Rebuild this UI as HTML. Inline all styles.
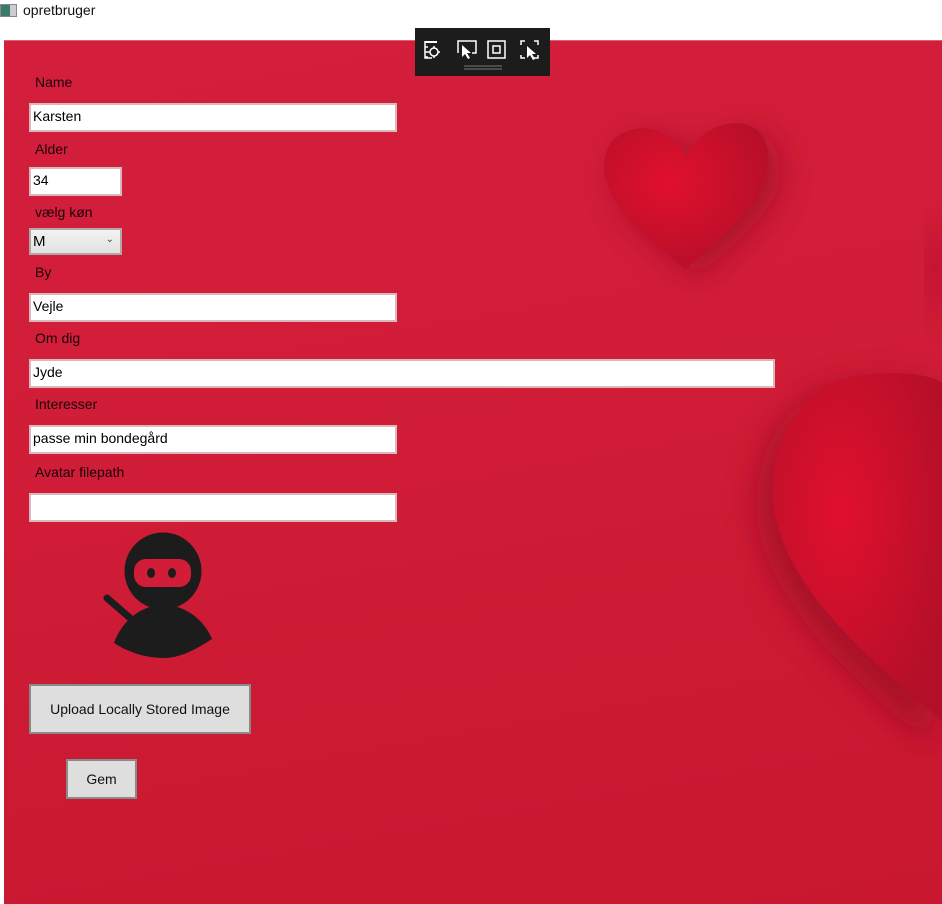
<!DOCTYPE html>
<html><head><meta charset="utf-8"><style>
*{margin:0;padding:0;box-sizing:border-box}
body{width:942px;height:904px;background:#fff;font-family:"Segoe UI","Liberation Sans",sans-serif;font-size:14px;position:relative;overflow:hidden;color:#111}
.title{position:absolute;left:0;top:0;height:22px;line-height:20px;font-size:14px}
.title i{display:inline-block;width:17px;height:13px;border:1px solid #888;background:linear-gradient(90deg,#3a7a6a 60%,#ccc 60%);vertical-align:-2px;margin-right:6px}
.main{position:absolute;left:4px;top:40px;width:938px;height:864px;background:linear-gradient(170deg,#d31f3c 0%,#d11d38 40%,#c8172f 100%);overflow:hidden;border-top:1px solid #e06070}
.lbl{position:absolute;left:35px;font-size:14px;color:#1a0508}
.in{position:absolute;left:29px;height:29px;background:#fff;border:2px solid #d8b8bc;padding-left:2px;line-height:23px;font-size:14px;color:#000}
.btn{position:absolute;background:#dedede;border:2px solid #8a8a8a;text-align:center;font-size:14px;color:#111}
.tb{position:absolute;left:415px;top:28px;width:135px;height:48px;background:#1c1c1c}
</style></head><body>
<div class="title"><i></i>opretbruger</div>
<div class="main">
<svg width="938" height="864" style="position:absolute;left:0;top:0">
<defs><filter id="b" x="-50%" y="-50%" width="200%" height="200%"><feGaussianBlur stdDeviation="16"/></filter>
<radialGradient id="g" cx="40%" cy="40%" r="70%"><stop offset="0" stop-color="#e0102e"/><stop offset="1" stop-color="#b30f28"/></radialGradient></defs>
<g transform="translate(10,10)"><path d="M684 226 C640 190 600 160 602 120 C604 90 640 78 665 95 C675 102 682 110 684 118 C690 100 710 82 735 82 C765 84 772 115 762 140 C748 175 710 200 684 226Z" fill="#9a0a20" filter="url(#b)" opacity=".7"/></g>
<path d="M682 228 C640 195 600 165 600 122 C601 92 636 78 662 94 C673 101 680 110 682 118 C689 98 708 82 734 82 C764 84 770 114 760 140 C746 176 710 202 682 228Z" fill="url(#g)"/>
<g transform="translate(-10,15)"><path d="M938 690 C880 640 780 560 765 470 C755 400 790 340 850 330 C900 322 930 330 938 340Z" fill="#9a0a20" filter="url(#b)" opacity=".7"/></g>
<path d="M938 680 C880 630 785 555 770 470 C760 405 795 345 852 335 C900 328 930 335 938 342Z" fill="url(#g)"/>
<path d="M938 180 C925 200 920 240 938 290Z" fill="#a80c24" filter="url(#b)"/>
</svg>
</div>
<div class="tb">
<svg width="135" height="48" fill="none" stroke="#fff" stroke-width="1.5">
<rect x="10" y="13" width="12" height="2" fill="#fff" stroke="none"/>
<path d="M10 13v17h7M10 19h3M10 24h3M10 29h3"/><circle cx="19" cy="24" r="4"/><path d="M19 18v2M19 28v2M13 24h2M23 24h2"/>
<path d="M43 25v-12h18v12h-4"/><path d="M47 17l0 12 3-3 3 5 2-1-3-5 4 0z" fill="#fff" stroke="none"/>
<rect x="73" y="13" width="17" height="17"/><rect x="78" y="18" width="7" height="7"/>
<path d="M106 17v-4h4M119 13h4v4M106 27v3h4M123 27v3h-4"/><path d="M112 18l0 12 3-3 3 5 2-1-3-5 4 0z" fill="#fff" stroke="none"/>
<path d="M49 38h38M49 41h38" stroke="#777" stroke-width="1"/>
</svg></div>
<div class="lbl" style="top:74px">Name</div>
<div class="in" style="top:103px;width:368px">Karsten</div>
<div class="lbl" style="top:141px">Alder</div>
<div class="in" style="top:167px;width:93px">34</div>
<div class="lbl" style="top:204px">vælg køn</div>
<div class="in" style="top:228px;width:93px;height:27px;background:linear-gradient(#f2f2f2,#e2e2e2);border-color:#b0a8a8;line-height:23px;font-size:15px">M<span style="position:absolute;right:6px;top:-2px;font-size:10px;color:#444">&#8964;</span></div>
<div class="lbl" style="top:264px">By</div>
<div class="in" style="top:293px;width:368px">Vejle</div>
<div class="lbl" style="top:330px">Om dig</div>
<div class="in" style="top:359px;width:746px">Jyde</div>
<div class="lbl" style="top:396px">Interesser</div>
<div class="in" style="top:425px;width:368px">passe min bondegård</div>
<div class="lbl" style="top:464px">Avatar filepath</div>
<div class="in" style="top:493px;width:368px"></div>
<svg width="120" height="130" style="position:absolute;left:100px;top:530px">
<line x1="7" y1="68" x2="30" y2="88" stroke="#1c1c1c" stroke-width="7" stroke-linecap="round"/>
<circle cx="63" cy="41" r="38.5" fill="#1c1c1c"/>
<rect x="34" y="29" width="57" height="28" rx="12" fill="#d11d38"/>
<ellipse cx="51" cy="43" rx="4" ry="5" fill="#1c1c1c"/><ellipse cx="72" cy="43" rx="4" ry="5" fill="#1c1c1c"/>
<path d="M14 113 C22 90 42 75 63 75 C86 75 104 90 112 109 C95 120 80 128 63 128 C45 128 28 122 14 113Z" fill="#1c1c1c"/>
</svg>
<div class="btn" style="left:29px;top:684px;width:222px;height:50px;line-height:46px">Upload Locally Stored Image</div>
<div class="btn" style="left:66px;top:759px;width:71px;height:40px;line-height:36px">Gem</div>
</body></html>
